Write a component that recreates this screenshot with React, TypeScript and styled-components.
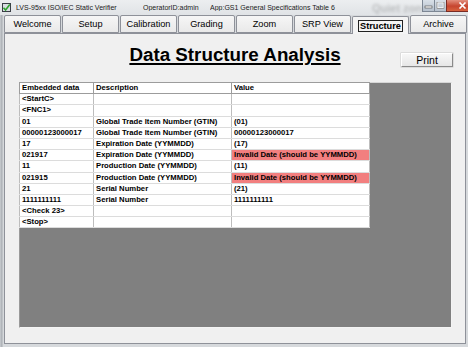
import React from 'react';
import styled, { createGlobalStyle } from 'styled-components';

// Rows of the structure table
interface Row {
  data: string;
  description: string;
  value: string;
  invalid?: boolean;
}

const rows: Row[] = [
  { data: '<StartC>', description: '', value: '' },
  { data: '<FNC1>', description: '', value: '' },
  { data: '01', description: 'Global Trade Item Number (GTIN)', value: '(01)' },
  { data: '00000123000017', description: 'Global Trade Item Number (GTIN)', value: '00000123000017' },
  { data: '17', description: 'Expiration Date (YYMMDD)', value: '(17)' },
  { data: '021917', description: 'Expiration Date (YYMMDD)', value: 'Invalid Date (should be YYMMDD)', invalid: true },
  { data: '11', description: 'Production Date (YYMMDD)', value: '(11)' },
  { data: '021915', description: 'Production Date (YYMMDD)', value: 'Invalid Date (should be YYMMDD)', invalid: true },
  { data: '21', description: 'Serial Number', value: '(21)' },
  { data: '1111111111', description: 'Serial Number', value: '1111111111' },
  { data: '<Check 23>', description: '', value: '' },
  { data: '<Stop>', description: '', value: '' },
];

const tabs = ['Welcome', 'Setup', 'Calibration', 'Grading', 'Zoom', 'SRP View', 'Structure', 'Archive'];

const App: React.FC = () => {
  return (
    <>
      <GlobalStyle />
      <Window>
        <TitleBar>
          <AppIcon viewBox="0 0 9 9">
            <rect x="0" y="0" width="9" height="9" fill="#3a3f46" />
            <rect x="1" y="1" width="7" height="7" fill="#d8dde2" />
            <path d="M1.5 4.8 L3.6 7 L7.8 1.6" stroke="#2fa52f" strokeWidth="1.6" fill="none" />
          </AppIcon>
          <TitleField $width={127}>LVS-95xx ISO/IEC Static Verifier</TitleField>
          <TitleField $width={67}>OperatorID:admin</TitleField>
          <TitleField $width={140}>App:GS1 General Specifications Table 6</TitleField>
          <GhostText>Quiet zon</GhostText>
          <Controls>
            <CtrlButton>
              <svg width="9" height="7" viewBox="0 0 9 7">
                <rect x="1" y="4" width="7" height="2" fill="#fff" stroke="#444" strokeWidth="0.6" />
              </svg>
            </CtrlButton>
            <CtrlButton>
              <svg width="9" height="7" viewBox="0 0 9 7">
                <rect x="1.5" y="0.5" width="6" height="5.5" fill="none" stroke="#fff" strokeWidth="1.4" />
                <rect x="1" y="0" width="7" height="6.5" fill="none" stroke="#444" strokeWidth="0.5" />
              </svg>
            </CtrlButton>
            <CloseButton>
              <svg width="9" height="7" viewBox="0 0 9 7">
                <path d="M1.5 0.5 L7.5 6.5 M7.5 0.5 L1.5 6.5" stroke="#fff" strokeWidth="1.6" />
              </svg>
            </CloseButton>
          </Controls>
        </TitleBar>

        <TabStrip>
          {tabs.map((t) => (
            <Tab key={t} $active={t === 'Structure'}>
              {t === 'Structure' ? <FocusLabel>{t}</FocusLabel> : t}
            </Tab>
          ))}
        </TabStrip>

        <Panel>
          <Header>
            <span />
            <Title>Data Structure Analysis</Title>
            <PrintButton>Print</PrintButton>
          </Header>
          <GridArea>
            <Table>
              <colgroup>
                <col style={{ width: 74 }} />
                <col style={{ width: 138 }} />
                <col style={{ width: 138 }} />
              </colgroup>
              <thead>
                <tr>
                  <HeadCell>Embedded data</HeadCell>
                  <HeadCell>Description</HeadCell>
                  <HeadCell>Value</HeadCell>
                </tr>
              </thead>
              <tbody>
                {rows.map((r, i) => (
                  <tr key={i}>
                    <Cell>{r.data}</Cell>
                    <Cell>{r.description}</Cell>
                    <Cell $invalid={r.invalid}>{r.value}</Cell>
                  </tr>
                ))}
              </tbody>
            </Table>
          </GridArea>
        </Panel>
      </Window>
    </>
  );
};

export default App;

const GlobalStyle = createGlobalStyle`
  html, body {
    margin: 0;
    padding: 0;
  }
  body {
    width: 468px;
    height: 347px;
    overflow: hidden;
    background: #c3c8cd;
    font-family: "Liberation Sans", Arial, sans-serif;
  }
`;

const Window = styled.div`
  width: 468px;
  height: 347px;
  display: flex;
  flex-direction: column;
  background: linear-gradient(90deg, #c9cdd1 0px, #a9adb2 2px, #d6d9dc 3px);
`;

const TitleBar = styled.div`
  height: 15px;
  display: flex;
  align-items: center;
  padding-left: 2px;
  background: linear-gradient(180deg, #eceef0, #e0e3e6);
  font-size: 7px;
  color: #1a1a1a;
  white-space: nowrap;
`;

const AppIcon = styled.svg`
  width: 9px;
  height: 9px;
  margin-right: 5px;
  flex: none;
`;

const TitleField = styled.span<{ $width: number }>`
  width: ${(p) => p.$width}px;
  flex: none;
  overflow: hidden;
`;

const GhostText = styled.span`
  margin-left: 22px;
  font-size: 11px;
  font-weight: bold;
  color: #3a3a3a;
  opacity: 0.25;
  filter: blur(1.4px);
`;

const Controls = styled.div`
  margin-left: auto;
  margin-right: 2px;
  align-self: flex-start;
  display: flex;
  height: 12px;
`;

const CtrlButton = styled.div`
  width: 13px;
  height: 12px;
  display: flex;
  align-items: center;
  justify-content: center;
  border: 1px solid #7d8794;
  border-top: none;
  margin-right: -1px;
  background: linear-gradient(180deg, #d9e0e8, #b6c0cc);
  box-sizing: border-box;
`;

const CloseButton = styled(CtrlButton)`
  width: 32px;
  margin-right: 0;
  border-color: #7a2c24;
  background: linear-gradient(180deg, #e3907e, #c6452f 55%, #d8623e);
`;

const TabStrip = styled.div`
  height: 18px;
  display: flex;
  align-items: flex-end;
  gap: 1px;
  padding-left: 4px;
`;

const Tab = styled.div<{ $active?: boolean }>`
  width: 57px;
  height: 18px;
  flex: none;
  box-sizing: border-box;
  display: flex;
  align-items: center;
  justify-content: center;
  border: 1px solid #8e9199;
  border-bottom: ${(p) => (p.$active ? 'none' : '1px solid #8e9199')};
  border-radius: 2px 2px 0 0;
  background: ${(p) => (p.$active ? '#f4f4f4' : 'linear-gradient(180deg, #f6f6f6, #e9e9e9)')};
  font-size: 9.2px;
  font-weight: ${(p) => (p.$active ? 'bold' : 'normal')};
  color: #000;
  position: relative;
  z-index: ${(p) => (p.$active ? 1 : 0)};
  margin-bottom: ${(p) => (p.$active ? '-1px' : '0')};
`;

const FocusLabel = styled.span`
  border: 1px solid #222;
  padding: 0 1px;
  line-height: 10px;
`;

const Panel = styled.div`
  flex: 1;
  margin: 0 2px 3px 4px;
  border: 1px solid #8e9199;
  background: #f0f0f0;
  display: flex;
  flex-direction: column;
`;

const Header = styled.div`
  height: 48px;
  flex: none;
  display: grid;
  grid-template-columns: 1fr auto 1fr;
  align-items: start;
`;

const Title = styled.h1`
  margin: 10px 0 0;
  font-size: 18.8px;
  line-height: 22px;
  font-weight: bold;
  text-decoration: underline;
  text-decoration-thickness: 1.5px;
  text-underline-offset: 2px;
  color: #000;
`;

const PrintButton = styled.button`
  justify-self: end;
  margin: 19px 12px 0 0;
  width: 52px;
  height: 14px;
  padding: 0;
  font-family: "Liberation Sans", Arial, sans-serif;
  font-size: 10.5px;
  line-height: 12px;
  color: #000;
  background: linear-gradient(180deg, #f7f7f7, #e6e6e6);
  border: 1px solid;
  border-color: #ffffff #8a8a8a #8a8a8a #ffffff;
  box-shadow: 0 0 0 0.5px #c8c8c8;
`;

const GridArea = styled.div`
  flex: 1;
  margin: 0 13px 15px 14px;
  background: #808080;
  border-top: 1px solid #d6d6d6;
  border-left: 1px solid #9a9a9a;
  border-right: 1px solid #f4f4f4;
  border-bottom: 1px solid #f4f4f4;
`;

const Table = styled.table`
  width: 350px;
  border-collapse: collapse;
  table-layout: fixed;
  background: #fff;
  border: 1px solid #404040;
  margin: -1px 0 0 -1px;
`;

const HeadCell = styled.th`
  height: 10.2px;
  padding: 0 2px;
  text-align: left;
  font-size: 7.7px;
  font-weight: bold;
  line-height: 10px;
  color: #000;
  border: 1px solid #9c9c9c;
  white-space: nowrap;
  overflow: hidden;
`;

const Cell = styled.td<{ $invalid?: boolean }>`
  height: 10.2px;
  padding: 0 2px;
  font-size: 7.7px;
  font-weight: bold;
  line-height: 10px;
  color: #000;
  white-space: nowrap;
  overflow: hidden;
  background: ${(p) => (p.$invalid ? '#f27f7f' : '#ffffff')};
  border-top: 1px solid #dcdcdc;
  border-bottom: 1px solid #dcdcdc;
  border-left: 1px solid #bdbdbd;
  border-right: 1px solid #bdbdbd;
`;
